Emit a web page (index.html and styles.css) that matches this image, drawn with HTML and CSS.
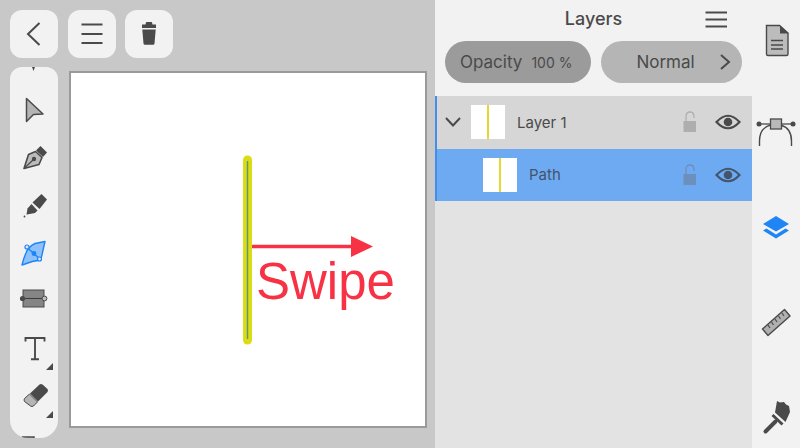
FILE: index.html
```html
<!doctype html>
<html lang="en">
<head>
	<meta charset="UTF-8">
	<title>Layers</title>
	<link rel="stylesheet" href="styles.css">
</head>
<body>
	<div class="workspace">
		<div class="topbar">
			<div class="tile">
				<svg width="48" height="48" viewBox="0 0 48 48"><path class="line" d="M29.5 13 L18 24 L29.5 35"/></svg>
			</div>
			<div class="tile">
				<svg width="48" height="48" viewBox="0 0 48 48"><path class="line" d="M13.5 14.5H34.5M13.5 24H34.5M13.5 33H34.5"/></svg>
			</div>
			<div class="tile">
				<svg width="48" height="48" viewBox="0 0 48 48"><path class="dark" d="M20.5 14.5 L21 12.5 Q21 12 21.500 12 H26.500 Q27 12 27 12.500 L27.500 14.500 H31 V18 H17 V14.500 Z"/><path class="dark" d="M17.300 19.500 H30.700 L29.500 33.500 Q29.400 34.700 28 34.700 H20 Q18.600 34.700 18.500 33.500 Z"/></svg>
			</div>
		</div>
		<div class="main">
			<div class="tools">
				<div class="tool">
					<svg width="48" height="48" viewBox="0 0 48 48"><path class="dark" d="M19 24 H28 L25 30 L23.500 34 L22 30 Z"/></svg>
				</div>
				<div class="tool">
					<svg width="48" height="48" viewBox="0 0 48 48"><path d="M16.500 13.500 L33 29 L23.500 29.500 L16.500 36.500 Z" fill="#b4b4b4" stroke="#4a4a4a" stroke-width="1.500" stroke-linejoin="round"/></svg>
				</div>
				<div class="tool">
					<svg width="48" height="48" viewBox="0 0 48 48"><path class="dark" d="M30.500 13 L37 19.500 L33 24 L26 17.500 Z"/><path d="M25.500 18.500 L32 24.500 L29 31.500 L14 35.500 L18.500 21.500 Z" fill="#bcbcbc" stroke="#4a4a4a" stroke-width="1.600" stroke-linejoin="round"/><path d="M14.500 35 L23 27" stroke="#4a4a4a" stroke-width="1.200"/><circle class="dark" cx="24" cy="26" r="2.200"/></svg>
				</div>
				<div class="tool">
					<svg width="48" height="48" viewBox="0 0 48 48"><path class="dark" d="M31.500 13 L37 18.500 L29.500 28 L22.500 21.500 Z"/><path class="dark" d="M21.500 23 L27.500 29.500 L25 32 L17 33.500 L16.500 33.500 L17.500 27.500 Z"/><circle class="dark" cx="14.500" cy="35.500" r="0.900"/></svg>
				</div>
				<div class="tool">
					<svg width="48" height="48" viewBox="0 0 48 48"><path d="M27 13.500 L37 11.500 Q35 20 34 25 L32.500 30 Q24 31 17 34 L14 35 Q16 27 18 23 Q20 17 27 13.500 Z" transform="translate(-2 1)" fill="#8ec0fb" stroke="#1f85f5" stroke-width="1.400" stroke-linejoin="round"/><path d="M18 18.500 L31 30" stroke="#1f85f5" stroke-width="1.400" transform="translate(-1 0)"/><circle cx="24" cy="24.500" r="2.400" fill="#1f85f5"/><circle cx="17" cy="18" r="2" fill="#d8e9fd" stroke="#1f85f5" stroke-width="1.200"/><circle cx="29.500" cy="30" r="2" fill="#d8e9fd" stroke="#1f85f5" stroke-width="1.200"/></svg>
				</div>
				<div class="tool">
					<svg width="48" height="48" viewBox="0 0 48 48"><rect x="13" y="13" width="21" height="17" fill="#858585" stroke="#4a4a4a" stroke-width="1"/><path d="M13 21.500 H34" stroke="#3c3c3c" stroke-width="1.200"/><circle class="dark" cx="12.500" cy="21.500" r="2.600"/><circle cx="34.500" cy="21.500" r="2.400" fill="#bbb" stroke="#4a4a4a" stroke-width="1"/></svg>
				</div>
				<div class="tool has-more">
					<svg width="48" height="48" viewBox="0 0 48 48"><path d="M15.500 16.500 V13 H34.500 V16.500 M25 13 V34 M21 34.300 H29" fill="none" stroke="#4a4a4a" stroke-width="1.900"/></svg>
				</div>
				<div class="tool has-more">
					<svg width="48" height="48" viewBox="0 0 48 48"><path class="dark" d="M29.500 11.500 Q31 10.500 32.500 11.500 L37.500 16 Q38.500 17.500 37.500 19 L28 28.500 L20 20.500 Z"/><path d="M19.500 21 L27.500 29 L23.500 33 Q22 34 20.500 33 L14.500 28.500 Q13.500 27 14.500 25.500 Z" fill="#b5b5b5" stroke="#4a4a4a" stroke-width="1"/></svg>
				</div>
				<div class="tool">
					<svg width="48" height="48" viewBox="0 0 48 48"><path d="M12.500 24 V16 H24 V19.500 H36 V24" fill="#bcbcbc" stroke="#4a4a4a" stroke-width="1.500"/></svg>
				</div>
			</div>
			<div class="canvas">
				<svg class="drawing" width="353" height="352" viewBox="0 0 353 352">
					<path d="M176.500 87 V267" stroke="#dcdc14" stroke-width="9" stroke-linecap="round"/>
					<path d="M176.500 88 V266" stroke="#5f9878" stroke-width="1.500"/>
					<path d="M181 173.500 H283" stroke="#f83245" stroke-width="3.500"/>
					<path d="M280 163 L302 173.500 L280 184 Z" fill="#f83245"/>
				</svg>
				<span class="swipe">Swipe</span>
			</div>
		</div>
	</div>

	<div class="layers">
		<div class="layers-head">
			<h1 class="layers-title">Layers</h1>
			<svg class="layers-menu" width="24" height="18" viewBox="0 0 24 18"><path class="line" d="M1.500 2.500H23M1.500 9.500H23M1.500 16.500H23" stroke-width="2"/></svg>
		</div>
		<div class="pills">
			<div class="pill pill-opacity"><span>Opacity</span><span class="pct">100 %</span></div>
			<div class="pill pill-blend">
				<span>Normal</span>
				<svg class="pill-arrow" width="12" height="18" viewBox="0 0 12 18"><path class="line" d="M2 2 L10 9 L2 16" stroke-width="1.500"/></svg>
			</div>
		</div>
		<div class="list">
			<div class="row">
				<svg class="caret" width="20" height="12" viewBox="0 0 20 12"><path class="line" d="M3 2 L10 9.500 L17 2" stroke-width="1.500"/></svg>
				<div class="thumb"><i></i></div>
				<span class="row-name">Layer 1</span>
				<svg class="lock" width="16" height="24" viewBox="0 0 16 24"><path d="M4 11 V6.500 Q4 2 8 2 Q12 2 12 6.500 V8" fill="none" stroke="#b0b0b0" stroke-width="1.300"/><rect x="1.500" y="11" width="12.500" height="11" fill="#aeaeae"/></svg>
				<svg class="eye" width="26" height="18" viewBox="0 0 26 18"><path d="M1.500 9 Q13 -3.500 24.500 9 Q13 21.500 1.500 9 Z" fill="none" stroke="#4a4a4a" stroke-width="2.200"/><circle cx="13" cy="9" r="4.300" fill="#4a4a4a"/></svg>
			</div>
			<div class="row row-on">
				<div class="thumb"><i></i></div>
				<span class="row-name">Path</span>
				<svg class="lock" width="16" height="24" viewBox="0 0 16 24"><path d="M4 11 V6.500 Q4 2 8 2 Q12 2 12 6.500 V8" fill="none" stroke="#6f8fb8" stroke-width="1.300"/><rect x="1.500" y="11" width="12.500" height="11" fill="#6c8fbc"/></svg>
				<svg class="eye" width="26" height="18" viewBox="0 0 26 18"><path d="M1.500 9 Q13 -3.500 24.500 9 Q13 21.500 1.500 9 Z" fill="none" stroke="#43556b" stroke-width="2.200"/><circle cx="13" cy="9" r="4.300" fill="#43556b"/></svg>
			</div>
		</div>
	</div>

	<div class="rail">
		<div class="rail-item">
			<svg width="48" height="48" viewBox="0 0 48 48"><path d="M14.500 13.500 H27.500 L36 21 V42 Q36 43.500 34.500 43.500 H16 Q14.500 43.500 14.500 42 Z" transform="translate(0 -1)" fill="#bcbcbc" stroke="#4a4a4a" stroke-width="1.400"/><path class="dark" d="M28 12.500 L36.500 20.500 H28 Z"/><path d="M19 27.500 H31M19 32 H31M19 36 H31" stroke="#4a4a4a" stroke-width="1.400"/></svg>
		</div>
		<div class="rail-item">
			<svg width="48" height="48" viewBox="0 0 48 48"><path d="M8 38 V33 Q8 20 19 17 M40 38 V33 Q40 20 29 17" transform="translate(-.5 0)" fill="none" stroke="#4a4a4a" stroke-width="1.400"/><path d="M8 16H40" stroke="#4a4a4a" stroke-width="1.300"/><circle class="dark" cx="7" cy="16" r="2.500"/><circle class="dark" cx="41" cy="16" r="2.500"/><rect x="18.500" y="11" width="11" height="10" fill="#b9b9b9" stroke="#4a4a4a" stroke-width="1.300"/></svg>
		</div>
		<div class="rail-item">
			<svg width="48" height="48" viewBox="0 0 48 48"><path d="M24 13 L37 21 L24 28.500 L11 21 Z" fill="#1f85f5"/><path d="M14.500 25.500 L24 31.500 L33.500 25.500 L37 27.500 L24 35.500 L11 27.500 Z" fill="#1f85f5"/></svg>
		</div>
		<div class="rail-item">
			<svg width="48" height="48" viewBox="0 0 48 48"><path d="M10.500 31 L32.500 11.500 L38 18 L16 37.500 Z" fill="#b0b0b0" stroke="#4a4a4a" stroke-width="1.400" stroke-linejoin="round"/><path d="M16 27 L18 30M19.500 24 L21.500 27M23 21 L25 24M26.500 18 L28.500 21M30 15 L32 18" stroke="#4a4a4a" stroke-width="1.200"/></svg>
		</div>
		<div class="rail-item">
			<svg width="48" height="48" viewBox="0 0 48 48"><path class="dark" d="M25 8 L28 9.500 L32 9 L34 11.500 L37 13 L38 19 L33.500 29 L23 19.500 Z"/><path class="dark" d="M21.500 21 L31.500 30.500 L29.500 32.500 L19.500 23 Z"/><path d="M23.500 28.500 L13.500 38.500" stroke="#4a4a4a" stroke-width="4" stroke-linecap="round"/></svg>
		</div>
	</div>
</body>
</html>
```

FILE: styles.css
```css
*{
	box-sizing: border-box;
}
html,body{
	margin: 0;
	padding: 0;
	height: 100%;
}
body{
	width: 800px;
	height: 448px;
	display: flex;
	overflow: hidden;
	background: #f2f2f2;
	color: #4a4a4a;
	font-family: Inter, "Liberation Sans", sans-serif;
}
svg{
	display: block;
	flex-shrink: 0;
}
.line{
	fill: none;
	stroke: #4a4a4a;
	stroke-width: 2;
}
.dark{
	fill: #4a4a4a;
}

/* left side */
.workspace{
	width: 435px;
	background: #c8c8c8;
	padding: 10px 0 10px 10px;
	display: flex;
	flex-direction: column;
	gap: 9px;
}
.topbar{
	display: flex;
	gap: 9.500px;
}
.tile{
	width: 48px;
	height: 48px;
	background: #f2f2f2;
	border-radius: 12px;
}
.main{
	display: flex;
	gap: 11px;
	align-items: flex-start;
}
.tools{
	width: 48px;
	height: 371px;
	background: #f2f2f2;
	border-radius: 12px 12px 18px 18px;
	overflow: hidden;
	display: flex;
	flex-direction: column;
	align-items: center;
	justify-content: center;
}
.tool{
	width: 48px;
	height: 48px;
	flex-shrink: 0;
	position: relative;
}
.has-more::after{
	content: "";
	position: absolute;
	right: 5px;
	bottom: 3px;
	border-style: solid;
	border-width: 0 0 7px 7px;
	border-color: transparent transparent #4a4a4a transparent;
}
.canvas{
	width: 358px;
	height: 357px;
	margin-top: 4px;
	background: #fff;
	border: 2px solid #9a9a9a;
	position: relative;
}
.drawing{
	position: absolute;
	left: 0;
	top: 0;
}
.swipe{
	position: absolute;
	left: 185px;
	top: 179px;
	font-family: "Liberation Sans", Arial, sans-serif;
	font-size: 51px;
	line-height: 60px;
	color: #f83245;
}

/* layers panel */
.layers{
	width: 317px;
	display: flex;
	flex-direction: column;
}
.layers-head{
	height: 41px;
	padding: 0 24px 4px 0;
	display: flex;
	align-items: center;
	position: relative;
}
.layers-title{
	width: 100%;
	margin: 0;
	padding-left: 24px;
	text-align: center;
	font-size: 18px;
	font-weight: 500;
	line-height: 37px;
}
.layers-menu{
	position: absolute;
	right: 24px;
	top: 10px;
}
.pills{
	height: 55px;
	padding: 0 10px;
	display: flex;
	gap: 10px;
}
.pill{
	height: 42px;
	border-radius: 21px;
	display: flex;
	align-items: center;
	font-size: 17px;
	position: relative;
}
.pill-opacity{
	width: 146px;
	background: #9b9b9b;
	padding-left: 15px;
	gap: 9px;
}
.pct{
	font-size: 14px;
}
.pill-blend{
	width: 141px;
	background: #b5b5b5;
	justify-content: center;
	padding-right: 12px;
}
.pill-arrow{
	position: absolute;
	right: 11px;
	top: 12px;
}
.list{
	flex: 1;
	background: #e3e3e3;
}
.row{
	height: 52.500px;
	background: #d6d6d6;
	border-left: 2px solid #3f8ef0;
	display: flex;
	align-items: center;
	font-size: 15px;
	padding-left: 6px;
}
.row-on{
	background: #6eaaf2;
	color: #43556b;
	padding-left: 46px;
}
.caret{
	margin-right: 8px;
}
.thumb{
	width: 34px;
	height: 34px;
	background: #fff;
	display: flex;
	justify-content: center;
}
.thumb i{
	width: 2px;
	margin-right: 1px;
	background: #e6d732;
}
.row-name{
	flex: 1;
	margin-left: 12px;
}
.lock{
	margin-right: 17px;
}
.eye{
	margin-right: 11px;
}

/* right rail */
.rail{
	width: 48px;
	padding-top: 13px;
	display: flex;
	flex-direction: column;
	gap: 47px;
}
.rail-item{
	width: 48px;
	height: 48px;
}
```
